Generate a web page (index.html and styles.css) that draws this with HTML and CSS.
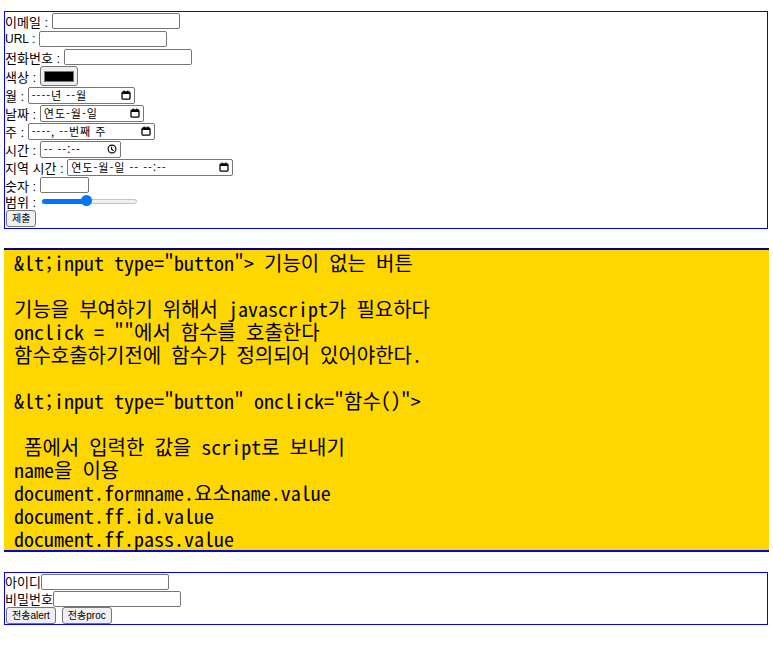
FILE: index.html
```html
<!DOCTYPE html>
<html lang="ko">
<head>
<meta charset="utf-8">
<title>form</title>
<link rel="stylesheet" href="styles.css">
</head>
<body>
<form class="box form-main">
  <div class="row">이메일 :&nbsp;<input class="txt" type="text"></div>
  <div class="row row-latin">URL :&nbsp;<input class="txt" type="text"></div>
  <div class="row">전화번호 :&nbsp;<input class="txt" type="text"></div>
  <div class="row row-color">색상 :&nbsp;<span class="color"><span class="swatch"></span></span></div>
  <div class="row">월 :&nbsp;<span class="field w-month">----년 --월<svg class="ico" viewBox="0 0 10 10"><rect x="1" y="2" width="8" height="7.2" rx="1.2" fill="none" stroke="#000" stroke-width="1.3"/><rect x="1" y="2" width="8" height="2" fill="#000"/><rect x="2.6" y="0.5" width="1.2" height="2" fill="#000"/><rect x="6.2" y="0.5" width="1.2" height="2" fill="#000"/></svg></span></div>
  <div class="row">날짜 :&nbsp;<span class="field w-date">연도-월-일<svg class="ico" viewBox="0 0 10 10"><rect x="1" y="2" width="8" height="7.2" rx="1.2" fill="none" stroke="#000" stroke-width="1.3"/><rect x="1" y="2" width="8" height="2" fill="#000"/><rect x="2.6" y="0.5" width="1.2" height="2" fill="#000"/><rect x="6.2" y="0.5" width="1.2" height="2" fill="#000"/></svg></span></div>
  <div class="row">주 :&nbsp;<span class="field w-week">----, --번째 주<svg class="ico" viewBox="0 0 10 10"><rect x="1" y="2" width="8" height="7.2" rx="1.2" fill="none" stroke="#000" stroke-width="1.3"/><rect x="1" y="2" width="8" height="2" fill="#000"/><rect x="2.6" y="0.5" width="1.2" height="2" fill="#000"/><rect x="6.2" y="0.5" width="1.2" height="2" fill="#000"/></svg></span></div>
  <div class="row">시간 :&nbsp;<span class="field w-time">-- --:--<svg class="ico" viewBox="0 0 10 10"><circle cx="5" cy="5" r="3.9" fill="none" stroke="#000" stroke-width="1.1"/><path d="M4.6 2.8 V5.3 L6.6 6.8" fill="none" stroke="#000" stroke-width="1.1"/></svg></span></div>
  <div class="row">지역 시간 :&nbsp;<span class="field w-dt">연도-월-일 -- --:--<svg class="ico" viewBox="0 0 10 10"><rect x="1" y="2" width="8" height="7.2" rx="1.2" fill="none" stroke="#000" stroke-width="1.3"/><rect x="1" y="2" width="8" height="2" fill="#000"/><rect x="2.6" y="0.5" width="1.2" height="2" fill="#000"/><rect x="6.2" y="0.5" width="1.2" height="2" fill="#000"/></svg></span></div>
  <div class="row">숫자 :&nbsp;<input class="txt num" type="text"></div>
  <div class="row row-range">범위 :&nbsp;<span class="range"><span class="range-fill"></span><span class="range-thumb"></span></span></div>
  <div class="row"><button class="btn" type="button">제출</button></div>
</form>

<pre class="note">&amp;lt;input type="button"&gt; 기능이 없는 버튼

기능을 부여하기 위해서 javascript가 필요하다
onclick = ""에서 함수를 호출한다
함수호출하기전에 함수가 정의되어 있어야한다.

&amp;lt;input type="button" onclick="함수()"&gt;

 폼에서 입력한 값을 script로 보내기
name을 이용
document.formname.요소name.value
document.ff.id.value
document.ff.pass.value</pre>

<form class="box form-ff" name="ff">
  <div class="row">아이디<input class="txt" type="text" name="id"></div>
  <div class="row">비밀번호<input class="txt" type="password" name="pass"></div>
  <div class="row"><button class="btn" type="button">전송alert</button><button class="btn btn-gap" type="button">전송proc</button></div>
</form>
</body>
</html>
```
FILE: styles.css
```css
html, body {
  margin: 0;
  padding: 0;
  background: #fff;
}
body {
  padding: 11px 5px 0 4px;
  font-family: "Liberation Sans", "Noto Sans CJK KR", sans-serif;
  font-size: 13px;
  color: #000;
}
.box {
  border: 1px solid #0000ff;
  margin: 0;
  display: flex;
  flex-direction: column;
}
.form-main {
  padding: 0 0 1px 0;
}
.row {
  height: 18px;
  display: flex;
  align-items: center;
  white-space: nowrap;
}
.row-latin { font-size: 12px; }
.row-color { height: 20px; }
.row-range { height: 15px; }
.txt {
  box-sizing: border-box;
  width: 128px;
  height: 16px;
  margin: 0;
  padding: 0 2px;
  border: 1px solid #767676;
  border-radius: 2px;
  background: #fff;
  font: 11px "Liberation Sans", "Noto Sans CJK KR", sans-serif;
  outline: none;
}
.num { width: 49px; }
.color {
  box-sizing: border-box;
  width: 38px;
  height: 20px;
  border: 1px solid #767676;
  border-radius: 3px;
  background: #efefef;
  display: flex;
  align-items: center;
  justify-content: center;
}
.swatch {
  width: 30px;
  height: 11px;
  background: #000;
  border: 1px solid #777;
  box-sizing: border-box;
}
.field {
  box-sizing: border-box;
  height: 17px;
  border: 1px solid #767676;
  border-radius: 2px;
  background: #fff;
  display: flex;
  align-items: center;
  padding: 0 3px 0 3px;
  font-family: "Noto Sans CJK KR", sans-serif;
  font-size: 11px;
  letter-spacing: 1px;
  justify-content: space-between;
}
.w-month { width: 107px; }
.w-date { width: 104px; }
.w-week { width: 127px; }
.w-time { width: 81px; }
.w-dt { width: 166px; }
.ico {
  width: 10px;
  height: 10px;
  flex: none;
}
.range {
  position: relative;
  width: 95px;
  height: 5px;
  margin-left: 2px;
  background: #efefef;
  border: 1px solid #c4c4c4;
  border-radius: 3px;
  box-sizing: border-box;
}
.range-fill {
  position: absolute;
  left: -1px;
  top: -1px;
  width: 45px;
  height: 5px;
  background: #0075ff;
  border-radius: 3px;
}
.range-thumb {
  position: absolute;
  left: 38px;
  top: -5px;
  width: 11px;
  height: 11px;
  border-radius: 50%;
  background: #0075ff;
}
.btn {
  box-sizing: border-box;
  height: 17px;
  margin: 0 0 0 1px;
  padding: 0 5px;
  border: 1px solid #767676;
  border-radius: 3px;
  background: #efefef;
  font: 10px "Liberation Sans", "Noto Sans CJK KR", sans-serif;
  color: #000;
  line-height: 15px;
}
.btn-gap { margin-left: 6px; }
.note {
  margin: 19px -1px 0 0;
  padding: 1px 0 0 10px;
  background: #ffd700;
  border-top: 2px solid #0000aa;
  border-bottom: 2px solid #0000ff;
  font-family: "Noto Sans Mono CJK KR", "Liberation Mono", monospace;
  font-size: 20px;
  line-height: 23px;
  color: #000;
}
.form-ff {
  margin-top: 20px;
  padding-bottom: 0;
}
.form-ff .row { height: 17px; }
```
